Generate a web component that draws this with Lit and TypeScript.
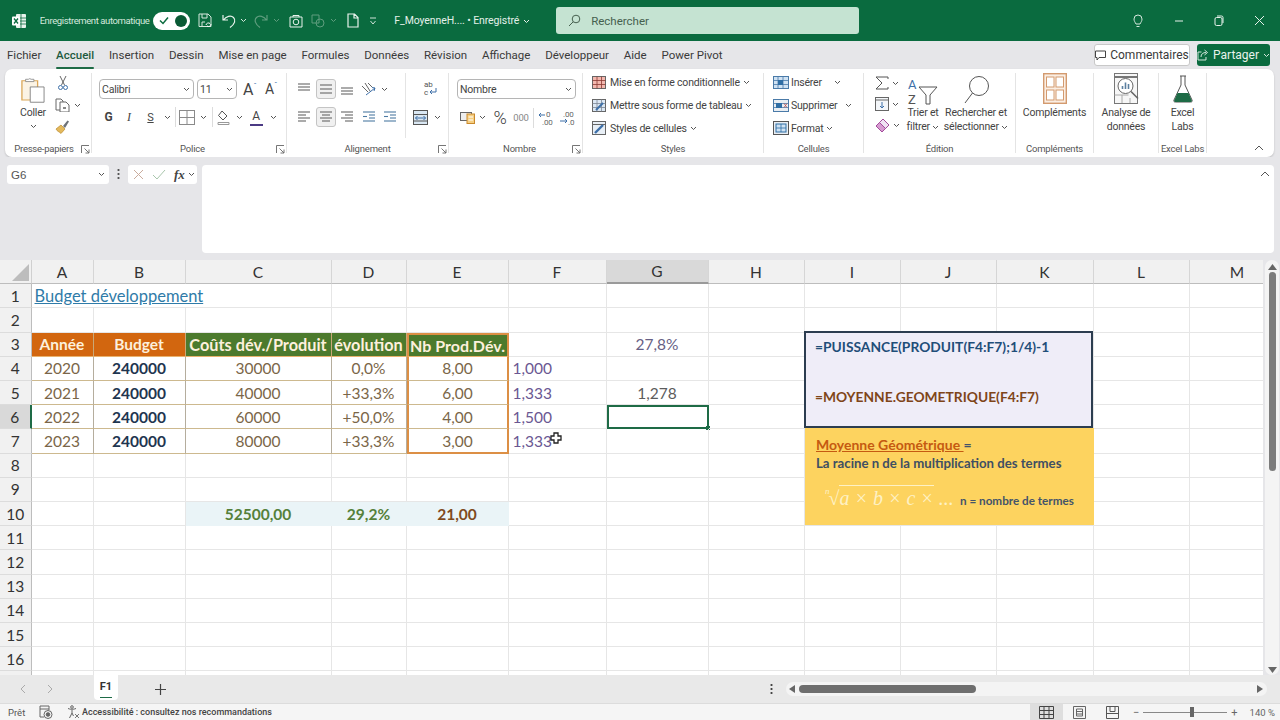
import { css, html, LitElement, svg, TemplateResult } from "lit";
import { customElement } from "lit/decorators.js";
import { classMap } from "lit/directives/class-map.js";

// small svg helper, every icon is stroked by default
const s = svg;
const ic = (w: number, h: number, body: unknown) => html`<svg
    width=${w} height=${h} viewBox="0 0 ${w} ${h}" fill="none" stroke="currentColor" stroke-width="1">${body}</svg>`;

const chev = (w = 7, c = "#555") => html`<svg width=${w} height="5" viewBox="0 0 7 5" fill="none" stroke=${c} stroke-width="1"><path d="M1 1l2.5 2.5L6 1"/></svg>`;
const lines = (rows: number[][], c = "#666") => html`<svg width="16" height="14" viewBox="0 0 16 14" fill="none" stroke=${c} stroke-width="1.1">
    ${rows.map((r) => s`<path d="M${r[0]} ${r[2]}H${r[1]}"/>`)}</svg>`;

const icons = {
    excel: html`<svg width="14" height="16" viewBox="0 0 14 16"><rect x="4" y="1" width="10" height="14" rx="1" fill="#e8f2ec"/><path d="M9 1v14M4 5h10M4 8h10M4 11h10" stroke="#0a6b3f" stroke-width=".8"/><rect x="0" y="3.5" width="8" height="9" rx="1" fill="#fff"/><path d="M2 5.5l4 5M6 5.5l-4 5" stroke="#0a6b3f" stroke-width="1.3"/></svg>`,
    save: ic(14, 15, s`<path d="M1 1h9l3 3v9.5H1zM4 1v4h5V1M4 14V9h3" stroke="#d5e8dd"/><path d="M8 12a2.5 2.5 0 014-1.5M13 11a2.5 2.5 0 01-4 2" stroke="#fff"/>`),
    undo: ic(16, 16, s`<path d="M2 2v5h5M2.5 7C5 3 10 2 12.5 4.5 15 7 14 11 9 14.5" stroke="#e8f2ec" stroke-width="1.2"/>`),
    redo: ic(16, 16, s`<path d="M14 2v5H9M13.5 7C11 3 6 2 3.5 4.5 1 7 2 11 7 14.5" stroke="#5f9d7e" stroke-width="1.2"/>`),
    cam: ic(14, 14, s`<path d="M1 3h12v10H1zM4 3V1.5h6V3" stroke="#e8f2ec"/><circle cx="7" cy="8" r="2.8" stroke="#e8f2ec"/>`),
    shapes: ic(14, 14, s`<path d="M1 1h7v8H1z" stroke="#5f9d7e"/><circle cx="9" cy="9" r="4" stroke="#5f9d7e"/>`),
    doc: ic(12, 15, s`<path d="M1 1h6.5L11 4.5V14H1zM7 1v4h4" stroke="#e8f2ec" stroke-width="1.2"/>`),
    more: ic(8, 8, s`<path d="M1 1h6M1.5 4l2.5 3 2.5-3" stroke="#cfe3d8"/>`),
    search: html`<svg width="13" height="13" viewBox="0 0 13 13" fill="none" stroke="#46604f"><circle cx="8" cy="5" r="3.8"/><path d="M5.2 7.8L1 12"/></svg>`,
    bulb: ic(10, 14, s`<path d="M3 10C2 8 1 7 1 5a4 4 0 018 0c0 2-1 3-2 5zM3.5 12.5h3" stroke="#d5e8dd"/>`),
    min: ic(10, 10, s`<path d="M1 5h8" stroke="#e8f2ec"/>`),
    restore: ic(10, 11, s`<rect x="1" y="2.5" width="7" height="8" rx="1.5" stroke="#e8f2ec"/><path d="M3 1h4.5A1.5 1.5 0 019 2.5V8" stroke="#e8f2ec"/>`),
    close: ic(11, 11, s`<path d="M1 1l9 9M10 1l-9 9" stroke="#e8f2ec"/>`),
    comment: ic(11, 11, s`<path d="M.5 1h10v6.5H4L2 10V7.5H.5z" stroke="#444"/>`),
    share: ic(12, 12, s`<path d="M4.5 3H1v8h8V8M4 8c0-3 2-4.5 5-4.5M7.5 1l3 2.5-3 2.5" stroke="#d5e8dd"/>`),
    paste: html`<svg width="24" height="26" viewBox="0 0 26 34" preserveAspectRatio="none" fill="none"><path d="M1 5h17v25H1z" fill="#fbf3e4" stroke="#dba757" stroke-width="1.4"/><path d="M5 6V3h3a2 2 0 013 0h3v3z" fill="#fff" stroke="#888"/><path d="M10 13h15v20H10z" fill="#fff" stroke="#777"/></svg>`,
    cut: ic(10, 16, s`<path d="M2 1l4.5 9M8 1L3.5 10" stroke="#666"/><circle cx="2.5" cy="12.5" r="2" stroke="#3d6fa8"/><circle cx="7.5" cy="12.5" r="2" stroke="#3d6fa8"/>`),
    copy: ic(15, 14, s`<path d="M1 1h5l2 2v9H1z" stroke="#666"/><path d="M5 4h6l3 3v7H5z" fill="#fff" stroke="#666"/><rect x="8" y="9" width="3" height="2" fill="#888" stroke="none"/>`),
    brush: html`<svg width="15" height="15" viewBox="0 0 15 15"><path d="M1 10l5-4 4 4-4 4.5c-1-1.5-4-2-5-4.5z" fill="#e4b95c" stroke="#b98a2c" stroke-width=".7"/><path d="M8 7l4.5-5.5 1.5 1L10 9" fill="#6d7278"/></svg>`,
    border: ic(16, 15, s`<rect x=".5" y=".5" width="15" height="14" stroke="#8a8a8a"/><path d="M8 .5v14M.5 7.5h15" stroke="#8a8a8a"/>`),
    fill: html`<svg width="16" height="15" viewBox="0 0 16 15" fill="none" stroke="#555"><path d="M6 1l5 5-4 4-4.5-4.5z"/><path d="M2 12.5h11v2H2z" fill="#fff" stroke="#999"/></svg>`,
    orient: html`<svg width="16" height="15" viewBox="0 0 16 15" fill="none" stroke="#666"><path d="M1 4l6 6M4 1l5 8M7 1l4 4" stroke-width="1"/><path d="M5 13L14 6M11 5.5l3 .5-1 3" stroke="#3d6fa8"/></svg>`,
    wrap: html`<svg width="15" height="17" viewBox="0 0 15 17"><text x="1" y="7" font-size="8" fill="#555" font-family="Roboto">ab</text><text x="1" y="15" font-size="8" fill="#555" font-family="Roboto">c</text><path d="M13 8v4H7M9 10l-2 2 2 2" fill="none" stroke="#3d6fa8"/></svg>`,
    merge: html`<svg width="15" height="15" viewBox="0 0 15 15" fill="none"><rect x=".5" y=".5" width="14" height="14" fill="#d9e7f3" stroke="#555"/><path d="M.5 4.5h14M.5 11h14" stroke="#555"/><path d="M2.5 8h10M4.5 6l-2 2 2 2M10.5 6l2 2-2 2" stroke="#3d6fa8"/></svg>`,
    account: html`<svg width="15" height="15" viewBox="0 0 15 15" fill="none"><rect x=".5" y="2.5" width="11" height="8" fill="#eee" stroke="#666"/><rect x="7" y="4" width="7.5" height="9.5" fill="#f6cf82" stroke="#c9892c"/><path d="M8.5 7h4.5M8.5 10h4.5" stroke="#fff"/></svg>`,
    decUp: html`<svg width="16" height="16" viewBox="0 0 16 16"><text x="8" y="7" font-size="8" fill="#666" font-family="Roboto">0</text><text x="4" y="15" font-size="8" fill="#666" font-family="Roboto">.00</text><path d="M1 5h6M3 3L1 5l2 2" fill="none" stroke="#3d6fa8"/></svg>`,
    decDown: html`<svg width="16" height="16" viewBox="0 0 16 16"><text x="4" y="7" font-size="8" fill="#666" font-family="Roboto">.00</text><text x="9" y="15" font-size="8" fill="#666" font-family="Roboto">.0</text><path d="M1 11h7M6 9l2 2-2 2" fill="none" stroke="#3d6fa8"/></svg>`,
    cond: html`<svg width="14" height="13" viewBox="0 0 14 13"><rect x=".5" y=".5" width="13" height="12" fill="#f3b7ae" stroke="#666"/><path d="M.5 4.5h13M.5 8.5h13M5 .5v12M9.5 .5v12" stroke="#8b3a33" stroke-width=".8"/></svg>`,
    table: html`<svg width="14" height="13" viewBox="0 0 14 13" fill="none"><rect x=".5" y=".5" width="13" height="12" fill="#dbe7f3" stroke="#666"/><path d="M.5 4.5h13M.5 8.5h13M5 .5v12M9.5 .5v12" stroke="#7b8794" stroke-width=".8"/><path d="M4 11l7-7" stroke="#3d6fa8" stroke-width="2"/></svg>`,
    cstyle: html`<svg width="14" height="14" viewBox="0 0 14 14" fill="none"><rect x=".5" y=".5" width="13" height="13" fill="#e8eff6" stroke="#666"/><path d="M.5 3.5h13" stroke="#666"/><path d="M3 12l8-8" stroke="#3d6fa8" stroke-width="2.4"/></svg>`,
    ins: html`<svg width="16" height="13" viewBox="0 0 16 13"><rect x=".5" y=".5" width="15" height="12" fill="#cfe2f3" stroke="#4a7aa8"/><path d="M5 .5v12M10 .5v12M.5 4.5h15M.5 8.5h15" stroke="#4a7aa8" stroke-width=".8"/><rect x="5" y="4" width="5" height="5" fill="#2f6ea5"/></svg>`,
    del: html`<svg width="16" height="13" viewBox="0 0 16 13"><rect x=".5" y=".5" width="15" height="12" fill="#e9eef3" stroke="#4a7aa8"/><path d="M.5 4.5h15M.5 8.5h15" stroke="#4a7aa8" stroke-width=".8"/><rect x="3" y="4" width="6" height="5" fill="#2f6ea5"/><path d="M11 4.5l3 4M14 4.5l-3 4" stroke="#b55" stroke-width=".9"/></svg>`,
    fmt: html`<svg width="16" height="14" viewBox="0 0 16 14"><rect x=".5" y=".5" width="15" height="13" fill="#e9eef3" stroke="#555"/><rect x="3" y="3" width="10" height="8" fill="#cfe2f3" stroke="#2f6ea5"/><path d="M3 7h10M8 3v8" stroke="#2f6ea5" stroke-width=".8"/></svg>`,
    sigma: html`<svg width="14" height="14" viewBox="0 0 14 14" fill="none" stroke="#555"><path d="M13 3V1H1l6 6-6 6h12v-2"/></svg>`,
    fillDown: html`<svg width="14" height="14" viewBox="0 0 14 14" fill="none"><rect x=".5" y=".5" width="13" height="13" fill="#f3f6f9" stroke="#666"/><path d="M.5 3h13" stroke="#666"/><path d="M7 5v6M5 9l2 2 2-2" stroke="#3d6fa8"/></svg>`,
    eraser: html`<svg width="15" height="15" viewBox="0 0 15 15"><path d="M1 8l7-7 6 6-7 7z" fill="#efe3f3" stroke="#a34b9c"/><path d="M1 8l3.5-3.5 6 6L7 14z" fill="#d69bd0" stroke="#a34b9c"/></svg>`,
    sort: html`<svg width="32" height="28" viewBox="0 0 32 28"><text x="1" y="11" font-size="13" fill="#3d6fa8" font-family="Roboto">A</text><text x="1" y="26" font-size="13" fill="#555" font-family="Roboto">Z</text><path d="M12 9h18l-7 8v9h-4v-9z" fill="none" stroke="#555"/></svg>`,
    find: html`<svg width="26" height="30" viewBox="0 0 26 30" fill="none" stroke="#555" stroke-width="1"><circle cx="16" cy="11" r="9.5"/><path d="M9.5 18L2 28"/></svg>`,
    addin: html`<svg width="24" height="31" viewBox="0 0 24 31"><rect x=".7" y=".7" width="22.6" height="29.6" fill="#fbeee3" stroke="#d39a6f" stroke-width="1.4"/><g fill="#fff" stroke="#d39a6f"><rect x="3.5" y="4" width="7.5" height="10"/><rect x="13" y="4" width="7.5" height="10"/><rect x="3.5" y="17" width="7.5" height="10"/><rect x="13" y="17" width="7.5" height="10"/></g></svg>`,
    analyze: html`<svg width="25" height="31" viewBox="0 0 25 31" fill="none"><rect x=".5" y=".5" width="23" height="30" fill="#f7f7f7" stroke="#777"/><path d="M.5 4h23" stroke="#777" stroke-width="2"/><path d="M.5 22h14M8 22v8M16 25v5" stroke="#aaa"/><circle cx="11.5" cy="13" r="7.5" fill="#fff" stroke="#666"/><path d="M8.5 16v-3M11.5 16V9.5M14.5 16v-5" stroke="#5b7f9f" stroke-width="1.6"/><path d="M17 18.5l7 7" stroke="#666" stroke-width="1.6"/></svg>`,
    flask: html`<svg width="20" height="28" viewBox="0 0 20 28"><path d="M7 1h6M8 1v9L1 25c-.5 1.5 0 2 1.5 2h15c1.5 0 2-.5 1.5-2L12 10V1" fill="none" stroke="#555"/><path d="M4.5 18h11l3.5 8-1 1H2l-1-1z" fill="#1e6b46"/></svg>`,
    launcher: html`<svg width="9" height="9" viewBox="0 0 9 9" fill="none" stroke="#666" stroke-width=".9"><path d="M.5 8V.5H8M3.5 3.5L8 8M8 4.5V8H4.5"/></svg>`,
    collapse: html`<svg width="10" height="6" viewBox="0 0 10 6" fill="none" stroke="#555"><path d="M1 5l4-4 4 4"/></svg>`,
    cancel: html`<svg width="11" height="11" viewBox="0 0 11 11" fill="none" stroke="#c9ab9c"><path d="M1 1l9 9M10 1l-9 9"/></svg>`,
    enter: html`<svg width="14" height="11" viewBox="0 0 14 11" fill="none" stroke="#a9c6ac"><path d="M1 6l4 4 8-9"/></svg>`,
    cursor: html`<svg width="12" height="12" viewBox="0 0 12 12"><path d="M4 1h4v3h3v4H8v3H4V8H1V4h3z" fill="#fff" stroke="#222" stroke-width="1.3"/></svg>`,
    macro: html`<svg width="14" height="14" viewBox="0 0 14 14" fill="none" stroke="#666"><path d="M1 1h9v4M1 1v11h4M1 4h9"/><circle cx="9" cy="9.5" r="4"/><circle cx="9" cy="9.5" r="1.8" fill="#666"/></svg>`,
    access: html`<svg width="13" height="14" viewBox="0 0 13 14" fill="none" stroke="#666"><circle cx="5" cy="2" r="1.3"/><path d="M1 3.5c2 1 6 1 8 0M5 5v3M5 8l-2.5 5M5 8l1.5 3"/><path d="M8 9l4 4M12 9l-4 4" stroke="#777"/></svg>`,
    viewNormal: html`<svg width="15" height="13" viewBox="0 0 15 13" fill="none" stroke="#444"><path d="M.5 .5h14v12H.5zM.5 4.5h14M.5 8.5h14M5 .5v12M10 .5v12"/></svg>`,
    viewPage: html`<svg width="13" height="13" viewBox="0 0 13 13" fill="none" stroke="#666"><path d="M.5 .5h12v12H.5z"/><path d="M3.5 3h6v7h-6zM3.5 5.5h6M3.5 8h6"/></svg>`,
    viewBreak: html`<svg width="13" height="13" viewBox="0 0 13 13" fill="none" stroke="#555"><path d="M.5 .5h12v12H.5zM.5 7.5h12M4 .5v5h5v-5"/></svg>`,
    navL: html`<svg width="6" height="10" viewBox="0 0 6 10" fill="none" stroke="#aaa"><path d="M5 1L1 5l4 4"/></svg>`,
    navR: html`<svg width="6" height="10" viewBox="0 0 6 10" fill="none" stroke="#aaa"><path d="M1 1l4 4-4 4"/></svg>`,
    plus: html`<svg width="11" height="11" viewBox="0 0 11 11" fill="none" stroke="#444" stroke-width="1.2"><path d="M5.5 0v11M0 5.5h11"/></svg>`,
};

@customElement("xl-titlebar")
export class XlTitlebar extends LitElement {
    protected render(): TemplateResult {
        return html`
            <div class="bar">
                <span class="logo">${icons.excel}</span>
                <span class="auto">Enregistrement automatique</span>
                <span class="toggle">
                    <svg width="10" height="9" viewBox="0 0 10 9" fill="none" stroke="#0a6b3f" stroke-width="1.5"><path d="M1 4.5l3 3 5-6"/></svg>
                    <i></i>
                </span>
                <span class="q save">${icons.save}</span>
                <span class="q undo">${icons.undo}</span>
                <span class="q c1">${chev(7, "#d5e8dd")}</span>
                <span class="q redo">${icons.redo}</span>
                <span class="q c1">${chev(7, "#5f9d7e")}</span>
                <span class="q cam">${icons.cam}</span>
                <span class="q shp">${icons.shapes}</span>
                <span class="q c1">${chev(7, "#5f9d7e")}</span>
                <span class="q docu">${icons.doc}</span>
                <span class="q mor">${icons.more}</span>
                <span class="file">F_MoyenneH.... • Enregistré ${chev(9, "#e8f2ec")}</span>
                <div class="search">${icons.search}<span>Rechercher</span></div>
                <span class="win bulb">${icons.bulb}</span>
                <span class="win">${icons.min}</span>
                <span class="win">${icons.restore}</span>
                <span class="win">${icons.close}</span>
            </div>
        `;
    }

    static styles = css`
        .bar {
            align-items: center;
            background: #0a6b3f;
            color: #e3f0e9;
            display: flex;
            font: 10px Roboto, sans-serif;
            height: 41px;
        }
        .logo { display: flex; margin-left: 12px; width: 28px; }
        .auto { color: #d5e8dd; font-size: 9.5px; letter-spacing: -0.4px; white-space: nowrap; width: 115px; }
        .toggle {
            align-items: center;
            background: #fff;
            border-radius: 9px;
            box-sizing: border-box;
            display: flex;
            height: 18px;
            justify-content: space-between;
            padding: 0 3px 0 6px;
            width: 37px;
        }
        .toggle i { background: #0a5a35; border-radius: 50%; height: 12px; width: 12px; }
        .q { align-items: center; display: flex; justify-content: center; }
        .save { margin-left: 7px; width: 16px; }
        .undo { margin-left: 8px; width: 16px; }
        .c1 { margin-left: 2px; width: 11px; }
        .redo { margin-left: 4px; width: 16px; }
        .cam { margin-left: 6px; width: 16px; }
        .shp { margin-left: 6px; width: 16px; }
        .docu { margin-left: 7px; width: 14px; }
        .mor { margin-left: 9px; width: 10px; }
        .file { font-size: 10.5px; letter-spacing: -0.1px; margin-left: 16px; white-space: nowrap; width: 164px; }
        .search {
            align-items: center;
            background: #c5e3d2;
            border-radius: 3px;
            box-sizing: border-box;
            color: #45604f;
            display: flex;
            font-size: 11.5px;
            gap: 10px;
            height: 27px;
            padding-left: 12px;
            width: 307px;
        }
        .win { display: flex; justify-content: center; width: 41px; }
        .bulb { margin-left: 259px; }
    `;
}

const tabs = ["Fichier", "Accueil", "Insertion", "Dessin", "Mise en page", "Formules", "Données", "Révision", "Affichage", "Développeur", "Aide", "Power Pivot"];

@customElement("xl-tabs")
export class XlTabs extends LitElement {
    protected render(): TemplateResult {
        return html`
            <div class="row">
                ${tabs.map((t) => html`<span class=${classMap({ tab: true, on: t === "Accueil" })}>${t}</span>`)}
                <span class="btn comment">${icons.comment}Commentaires</span>
                <span class="btn share">${icons.share}Partager ${chev(7, "#d5e8dd")}</span>
            </div>
        `;
    }

    static styles = css`
        .row {
            align-items: center;
            background: #e6e6e9;
            color: #3a3a3a;
            display: flex;
            font: 11.5px Roboto, sans-serif;
            gap: 14.8px;
            height: 28px;
            padding-left: 7px;
        }
        .tab { align-items: center; display: flex; height: 28px; position: relative; }
        .on { color: #1e5a3e; font-weight: 500; }
        .on::after {
            background: #1e6b46;
            border-radius: 1px;
            bottom: 0;
            content: "";
            height: 2px;
            left: 0;
            position: absolute;
            right: 0;
        }
        .btn {
            align-items: center;
            border-radius: 3px;
            box-sizing: border-box;
            display: flex;
            font-size: 12px;
            gap: 4px;
            height: 22px;
            white-space: nowrap;
        }
        .comment {
            background: #fff;
            border: 1px solid #c8c8c8;
            justify-content: center;
            margin-left: auto;
            width: 96px;
        }
        .share {
            background: #0a6b3f;
            color: #e8f2ec;
            justify-content: center;
            margin-left: -7.8px;
            margin-right: 10px;
            width: 73px;
        }
    `;
}

const styleRows = [
    [icons.cond, "Mise en forme conditionnelle"],
    [icons.table, "Mettre sous forme de tableau"],
    [icons.cstyle, "Styles de cellules"],
] as const;

const cellRows = [
    [icons.ins, "Insérer", "i"],
    [icons.del, "Supprimer", "d"],
    [icons.fmt, "Format", "f"],
] as const;

@customElement("xl-ribbon")
export class XlRibbon extends LitElement {
    private label(text: string, launcher = true): TemplateResult {
        return html`<div class="label"><span>${text}</span>${launcher ? html`<i class="launch">${icons.launcher}</i>` : ""}</div>`;
    }

    protected render(): TemplateResult {
        return html`
            <div class="ribbon">
                <section class="g clip">
                    <div class="body clip-body">
                        <div class="paste">${icons.paste}<span>Coller</span>${chev()}</div>
                        <div class="clip-tools">
                            <span class="cut">${icons.cut}</span>
                            <span>${icons.copy}${chev()}</span>
                            <span>${icons.brush}</span>
                        </div>
                    </div>
                    ${this.label("Presse-papiers")}
                </section>

                <section class="g police">
                    <div class="body rows">
                        <div class="r police1">
                            <span class="sel">Calibri ${chev()}</span>
                            <i></i>
                            <span class="sel">11 ${chev()}</span>
                            <span class="ab big">A<sup>ˆ</sup></span>
                            <span class="ab">A<sup>ˇ</sup></span>
                        </div>
                        <div class="r police2">
                            <b class="t fG">G</b>
                            <em class="t fI">I</em>
                            <u class="t fS">S</u>
                            <span class="t">${chev()}</span>
                            <span class="t"><i class="sep"></i></span>
                            <span class="t">${icons.border}</span>
                            <span class="t">${chev()}</span>
                            <span class="t"><i class="sep"></i></span>
                            <span class="t">${icons.fill}</span>
                            <span class="t">${chev()}</span>
                            <span class="t fA">A</span>
                            <span class="t">${chev()}</span>
                        </div>
                    </div>
                    ${this.label("Police")}
                </section>

                <section class="g align">
                    <div class="body align-body">
                        <div class="rows">
                            <div class="r al">
                                <span class="t">${lines([[2, 14, 2], [2, 14, 5], [2, 14, 8]])}</span>
                                <span class="t on">${lines([[2, 14, 3], [2, 14, 7], [2, 14, 11]])}</span>
                                <span class="t">${lines([[2, 14, 6], [2, 14, 9], [2, 14, 12]])}</span>
                                <span class="t">${icons.orient}</span>
                                <span class="t">${chev()}</span>
                            </div>
                            <div class="r al">
                                <span class="t">${lines([[2, 14, 2], [2, 10, 5], [2, 14, 8], [2, 10, 11]])}</span>
                                <span class="t on">${lines([[2, 14, 2], [4, 12, 5], [2, 14, 8], [4, 12, 11]])}</span>
                                <span class="t">${lines([[2, 14, 2], [6, 14, 5], [2, 14, 8], [6, 14, 11]])}</span>
                                <span class="t">${lines([[2, 14, 2], [8, 14, 5], [8, 14, 8], [2, 14, 11], [2, 6, 6.5]], "#4d7aa3")}</span>
                                <span class="t">${lines([[2, 14, 2], [8, 14, 5], [8, 14, 8], [2, 14, 11], [2, 6, 6.5]], "#4d7aa3")}</span>
                            </div>
                        </div>
                        <div class="wrapcol">
                            <span class="t">${icons.wrap}</span>
                            <span class="t mergeb">${icons.merge}${chev()}</span>
                        </div>
                    </div>
                    ${this.label("Alignement")}
                </section>

                <section class="g nombre">
                    <div class="body rows">
                        <div class="r"><span class="sel wide">Nombre ${chev()}</span></div>
                        <div class="r nombre2">
                            <span class="t">${icons.account}</span>
                            <span class="t">${chev()}</span>
                            <span class="t pct">%</span>
                            <span class="t mil">000</span>
                            <span class="t"><i class="sep"></i></span>
                            <span class="t">${icons.decUp}</span>
                            <span class="t">${icons.decDown}</span>
                        </div>
                    </div>
                    ${this.label("Nombre")}
                </section>

                <section class="g styles">
                    <div class="body list">
                        ${styleRows.map((r) => html`<div class="li"><span class="li-ic">${r[0]}</span>${r[1]} ${chev()}</div>`)}
                    </div>
                    ${this.label("Styles", false)}
                </section>

                <section class="g cells">
                    <div class="body list">
                        ${cellRows.map((r) => html`<div class="li ${r[2]}"><span class="li-ic">${r[0]}</span>${r[1]} ${chev()}</div>`)}
                    </div>
                    ${this.label("Cellules", false)}
                </section>

                <section class="g edit">
                    <div class="body edit-body">
                        <div class="edit-col">
                            <span class="t">${icons.sigma}${chev()}</span>
                            <span class="t">${icons.fillDown}${chev()}</span>
                            <span class="t">${icons.eraser}${chev()}</span>
                        </div>
                        <div class="bigb sort">${icons.sort}<span>Trier et<br />filtrer ${chev()}</span></div>
                        <div class="bigb find">${icons.find}<span>Rechercher et<br />sélectionner ${chev()}</span></div>
                    </div>
                    ${this.label("Édition", false)}
                </section>

                <section class="g addins">
                    <div class="body bigb">${icons.addin}<span>Compléments</span></div>
                    ${this.label("Compléments", false)}
                </section>

                <section class="g data">
                    <div class="body bigb">${icons.analyze}<span>Analyse de<br />données</span></div>
                </section>

                <section class="g labs">
                    <div class="body bigb">${icons.flask}<span>Excel<br />Labs</span></div>
                    ${this.label("Excel Labs", false)}
                </section>

                <span class="collapse">${icons.collapse}</span>
            </div>
        `;
    }

    static styles = css`
        :host { display: block; padding: 0 6px 0 5px; }
        .ribbon {
            background: #fff;
            border-radius: 7px;
            box-shadow: 0 1px 2px rgba(0, 0, 0, 0.18);
            color: #444;
            display: flex;
            font: 10.5px Roboto, sans-serif;
            height: 88px;
            letter-spacing: -0.2px;
            white-space: nowrap;
        }
        .g {
            border-right: 1px solid #e4e4e4;
            box-sizing: border-box;
            display: flex;
            flex-direction: column;
            height: 80px;
            margin-top: 4px;
        }
        .body { flex: 1; min-height: 0; }
        .label {
            color: #555;
            font-size: 9.5px;
            height: 14px;
            line-height: 14px;
            margin-bottom: -3px;
            position: relative;
            text-align: center;
        }
        .launch { bottom: 2px; display: flex; position: absolute; right: 1px; }
        .t { align-items: center; display: flex; justify-content: center; }
        .sep { background: #dcdcdc; display: block; height: 20px; width: 1px; }
        svg { display: block; flex: none; }

        .clip { width: 87px; }
        .clip .label { letter-spacing: -0.25px; padding-right: 8px; }
        .clip-body { display: flex; }
        .paste {
            align-items: center;
            display: flex;
            flex: none;
            flex-direction: column;
            margin-left: 8px;
            padding-top: 4px;
            width: 40px;
        }
        .paste span { line-height: 14px; margin: 3px 0 4px; }
        .clip-tools {
            align-items: flex-start;
            display: flex;
            flex-direction: column;
            gap: 7px;
            padding: 2px 0 0 2px;
        }
        .clip-tools span { align-items: center; display: flex; gap: 4px; }
        .clip-tools .cut { margin-left: 3px; }

        .rows { display: flex; flex-direction: column; gap: 8px; padding-top: 6px; }
        .r { display: grid; height: 20px; }
        .sel {
            align-items: center;
            border: 1px solid #b5b5b5;
            border-radius: 4px;
            box-sizing: border-box;
            display: flex;
            font-size: 10.5px;
            justify-content: space-between;
            padding: 0 3px 0 2px;
        }
        .wide { width: 119px; }

        .police { padding-left: 7px; width: 195px; }
        .police1 { grid-template-columns: 95px 3px 40px 22px 22px; }
        .police2 { grid-template-columns: 19px 22px 21px 12px 4px 20px 12px 6px 18px 12px 22px 12px; }
        .ab { align-self: center; font-size: 14px; margin-left: 6px; }
        .ab.big { font-size: 16px; }
        .ab sup { color: #3d6fa8; font-size: 8px; line-height: 0; }
        .fG { font-size: 12px; }
        .fI { font-family: "Liberation Serif", serif; font-size: 12px; }
        .fS { font-size: 11px; }
        .fA {
            align-self: center;
            border-bottom: 2.5px solid #4b3a84;
            color: #444;
            font-size: 12px;
            height: 15px;
            justify-self: center;
            width: 13px;
        }

        .align { width: 162px; }
        .align-body { display: flex; padding-left: 7px; }
        .al { column-gap: 1.5px; grid-template-columns: repeat(4, 20px) 8px; width: 111px; }
        .al:last-child { grid-template-columns: repeat(5, 20px); }
        .t.on { background: #f0f0f0; border: 1px solid #c4c4c4; border-radius: 3px; box-sizing: border-box; }
        .wrapcol {
            border-left: 1px solid #e4e4e4;
            display: flex;
            flex-direction: column;
            gap: 13px;
            height: 58px;
            padding: 7px 0 0 7px;
            width: 36px;
        }
        .mergeb { gap: 6px; justify-content: flex-start; }

        .nombre { padding-left: 8px; width: 134px; }
        .nombre2 { grid-template-columns: 20px 11px 24px 18px 6px 20px 22px; }
        .pct { font-size: 18px; font-weight: 300; }
        .mil { color: #888; font-size: 9.5px; }

        .styles { width: 181px; }
        .cells { width: 100px; }
        .list { display: flex; flex-direction: column; gap: 5px; padding-left: 9px; }
        .li { align-items: center; display: flex; gap: 3px; height: 18px; }
        .li-ic { display: flex; margin-right: 1px; }
        .cells .li-ic { margin-right: -1px; }
        .i > svg { margin-left: 9px; }
        .d > svg { margin-left: 5px; }

        .edit { width: 152px; }
        .edit-body { display: flex; }
        .edit-col {
            display: flex;
            flex-direction: column;
            gap: 7px;
            padding: 3px 0 0 11px;
            width: 31px;
        }
        .edit-col .t { gap: 3px; justify-content: flex-start; }
        .bigb {
            align-items: center;
            display: flex;
            flex-direction: column;
            line-height: 14px;
            text-align: center;
        }
        .bigb span { margin-top: 1px; }
        .bigb span svg { display: inline-block; vertical-align: middle; }
        .sort { padding-top: 5px; width: 34px; }
        .find { padding-top: 2px; width: 72px; }
        .sort span { margin-top: 0; }
        .addins { width: 78px; }
        .data { width: 65px; }
        .labs { width: 48px; }
        .addins svg, .data svg { margin-bottom: 1px; }
        .labs svg { margin: 2px 0; }
        .collapse { align-self: flex-end; margin: 0 10px 6px auto; }
    `;
}

@customElement("xl-formula")
export class XlFormula extends LitElement {
    protected render(): TemplateResult {
        return html`
            <div class="bar">
                <div class="name">G6 ${chev(9, "#555")}</div>
                <span class="dots"></span>
                <div class="fx">
                    ${icons.cancel}${icons.enter}
                    <em>fx</em>${chev()}
                </div>
                <div class="input">${icons.collapse}</div>
            </div>
        `;
    }

    static styles = css`
        .bar {
            align-items: flex-start;
            background: #e6e6e9;
            box-sizing: border-box;
            display: flex;
            font: 11.5px "Liberation Sans", sans-serif;
            height: 103px;
            padding: 8px 6px 0 7px;
        }
        svg { display: block; flex: none; }
        .name {
            align-items: center;
            background: #fff;
            border-radius: 3px;
            box-sizing: border-box;
            color: #555;
            display: flex;
            height: 19px;
            justify-content: space-between;
            padding: 0 3px 0 4px;
            width: 102px;
        }
        .dots {
            background: radial-gradient(circle, #555 1px, transparent 1.2px) center / 3px 4px repeat-y;
            height: 12px;
            margin: 3px 8px 0;
            width: 3px;
        }
        .fx {
            align-items: center;
            background: #fff;
            border-radius: 3px;
            box-sizing: border-box;
            display: flex;
            gap: 8px;
            height: 19px;
            padding-left: 5px;
            width: 69px;
        }
        .fx em { color: #444; font: italic bold 13px "Liberation Serif", serif; margin-right: -5px; }
        .input {
            background: #fff;
            border-radius: 4px;
            box-sizing: border-box;
            display: flex;
            flex: 1;
            height: 88px;
            justify-content: flex-end;
            margin-left: 5px;
            padding: 6px 4px 0 0;
        }
    `;
}

const COLS = ["A", "B", "C", "D", "E", "F", "G", "H", "I", "J", "K", "L", "M"];

type Cell = { t: string; c: string };
const cells: Record<string, Cell> = {
    A1: { t: "Budget développement", c: "link" },
    B1: { t: "", c: "noline" },
    A3: { t: "Année", c: "hd or" },
    B3: { t: "Budget", c: "hd or" },
    C3: { t: "Coûts dév./Produit", c: "hd gr" },
    D3: { t: "évolution", c: "hd gr" },
    E3: { t: "Nb Prod.Dév.", c: "hd gr ebox etop" },
    G3: { t: "27,8%", c: "vi" },
    G5: { t: "1,278", c: "gy" },
    C10: { t: "52500,00", c: "tot tg" },
    D10: { t: "29,2%", c: "tot tg" },
    E10: { t: "21,00", c: "tot tb" },
};
[
    ["2020", "30000", "0,0%", "8,00", "1,000"],
    ["2021", "40000", "+33,3%", "6,00", "1,333"],
    ["2022", "60000", "+50,0%", "4,00", "1,500"],
    ["2023", "80000", "+33,3%", "3,00", "1,333"],
].forEach((d, i) => {
    const r = i + 4;
    cells[`A${r}`] = { t: d[0], c: "td" };
    cells[`B${r}`] = { t: "240000", c: "td navy" };
    cells[`C${r}`] = { t: d[1], c: "td" };
    cells[`D${r}`] = { t: d[2], c: "td" };
    cells[`E${r}`] = { t: d[3], c: r === 7 ? "td ebox ebot" : "td ebox" };
    cells[`F${r}`] = { t: d[4], c: "ratio" };
});
cells.G6 = { t: "", c: "current" };

@customElement("xl-sheet")
export class XlSheet extends LitElement {
    protected render(): TemplateResult {
        const rows = Array.from({ length: 17 }, (_, i) => i + 1);
        return html`
            <div class="sheet">
                <div class="wrap">
                    <div class="grid">
                        <div class="corner"><i></i></div>
                        ${COLS.map((c) => html`<div class=${classMap({ ch: true, chs: c === "G" })}>${c}</div>`)}
                        ${rows.map((r) => html`
                            <div class=${classMap({ rh: true, rhs: r === 6 })}>${r < 17 ? r : ""}</div>
                            ${COLS.map((c) => {
                                const cell = cells[`${c}${r}`];
                                return html`<div class="cell ${cell?.c ?? ""}">${cell?.t ?? ""}</div>`;
                            })}
                        `)}
                    </div>
                    <div class="fbox">
                        <div class="f1">=PUISSANCE(PRODUIT(F4:F7);1/4)-1</div>
                        <div class="f2">=MOYENNE.GEOMETRIQUE(F4:F7)</div>
                    </div>
                    <div class="ybox">
                        <div class="y1"><u>Moyenne Géométrique </u><span>=</span></div>
                        <div class="y2">La racine n de la multiplication des termes</div>
                        <div class="y3">
                            <span class="math"><sup>n</sup><span class="root">√</span><span class="rad">a × b × c ×</span> ...</span>
                            <span class="nb">n = nombre de termes</span>
                        </div>
                    </div>
                    <span class="cursor">${icons.cursor}</span>
                </div>
                <div class="vscroll">
                    <svg width="9" height="6" viewBox="0 0 9 6"><path d="M4.5 0L9 6H0z" fill="#666"/></svg>
                    <i></i>
                    <svg width="9" height="6" viewBox="0 0 9 6"><path d="M4.5 6L9 0H0z" fill="#666"/></svg>
                </div>
            </div>
        `;
    }

    static styles = css`
        .sheet { background: #e6e6e9; display: flex; height: 415px; }
        .wrap { flex: none; height: 415px; overflow: hidden; position: relative; width: 1263px; }
        .grid {
            background: #fff;
            color: #222;
            display: grid;
            font: 15.5px Lato, sans-serif;
            grid-auto-rows: 24.2px;
            grid-template-columns: 31.5px 62px 92px 146px 75px 102px 98px 102px 96px 96px 96px 97px 96px 96px;
            grid-template-rows: 24.3px;
        }
        .corner { background: #f1f1f1; border-bottom: 1px solid #bdbdbd; border-right: 1px solid #d0d0d0; box-sizing: border-box; }
        .corner i {
            background: #bdbdbd;
            clip-path: polygon(100% 0, 100% 100%, 0 100%);
            display: block;
            height: 17px;
            margin: 4px 0 0 12px;
            width: 17px;
        }
        .ch, .rh { align-items: center; box-sizing: border-box; color: #333; display: flex; justify-content: center; }
        .ch { background: #f1f1f1; border-bottom: 1px solid #bdbdbd; border-right: 1px solid #d6d6d6; }
        .chs { background: #d9d9d9; border-bottom: 2px solid #9a9a9a; }
        .rh { background: #f1f1f1; border-bottom: 1px solid #dcdcdc; border-right: 1px solid #bdbdbd; }
        .rhs { background: #d9d9d9; border-right: 2px solid #1e6b46; }
        .cell {
            align-items: center;
            border-bottom: 1px solid #e6e6e6;
            border-right: 1px solid #e6e6e6;
            box-sizing: border-box;
            display: flex;
            justify-content: center;
            position: relative;
            white-space: nowrap;
        }
        .link {
            border-right: 0;
            color: #2f7ba8;
            font-size: 16.5px;
            justify-content: flex-start;
            padding-left: 3px;
            text-decoration: underline;
        }
        .noline { border-right: 0; }
        .hd { border-bottom: 1px solid #e9b26e; border-right: 1px solid #c9a877; color: #fdf0dc; font-weight: 700; }
        .or { background: #d2660f; }
        .gr { background: #4c7a2d; font-size: 16.3px; }
        .td { border-bottom: 1px solid #cdb98f; border-right: 1px solid #b5ad9d; color: #7a6648; }
        .navy { color: #1f3550; font-weight: 700; }
        .ebox { border-left: 2px solid #dc8f45; border-right: 2px solid #dc8f45; }
        .etop { border-top: 2px solid #dc8f45; font-size: 16px; }
        .ebot { border-bottom: 2px solid #dc8f45; }
        .ratio { color: #6a5792; justify-content: flex-start; padding-left: 4px; }
        .vi { color: #675f85; }
        .gy { color: #5c5c5c; }
        .tot { background: #eaf4f7; border-color: #eaf4f7; font-weight: 700; }
        .tg { color: #55803a; }
        .tb { color: #7f4a1d; }
        .current { outline: 2px solid #1e6b46; outline-offset: -2px; }
        .current::after {
            background: #1e6b46;
            bottom: -2px;
            content: "";
            height: 4px;
            position: absolute;
            right: -2px;
            width: 4px;
        }
        .fbox {
            background: #efedf8;
            border: 2px solid #2c3d50;
            box-sizing: border-box;
            display: flex;
            flex-direction: column;
            font: 700 13.8px Lato, sans-serif;
            gap: 33px;
            height: 97px;
            left: 804px;
            padding: 5px 9px;
            position: absolute;
            top: 71px;
            width: 289px;
        }
        .f1 { color: #1f4e79; }
        .f2 { color: #7f4519; }
        .ybox {
            background: #fdd35f;
            box-sizing: border-box;
            font: 700 13.2px Lato, sans-serif;
            height: 97px;
            left: 805px;
            padding: 8px 11px;
            position: absolute;
            top: 168px;
            width: 289px;
        }
        .y1 { color: #c55a11; font-size: 14px; line-height: 17px; }
        .y1 span { color: #44546a; }
        .y2 { color: #3f4f63; line-height: 16px; margin-top: 2px; white-space: nowrap; }
        .y3 { align-items: center; display: flex; margin-top: 16px; padding-left: 9px; }
        .math { color: #fdf1c5; font: italic 20px "Liberation Serif", serif; white-space: nowrap; width: 135px; }
        .math sup { font-size: 9px; line-height: 0; margin-right: -1px; vertical-align: 11px; }
        .root { font-style: normal; }
        .rad { border-top: 1px solid #fdf1c5; padding-top: 1px; }
        .nb { color: #44546a; font-size: 11.7px; margin-top: 2px; white-space: nowrap; }
        .cursor { display: flex; left: 550px; position: absolute; top: 172px; }
        .vscroll {
            align-items: center;
            background: #f4f4f4;
            border-radius: 8px;
            box-sizing: border-box;
            display: flex;
            flex-direction: column;
            height: 415px;
            margin-left: 2px;
            padding-top: 4px;
            width: 14px;
        }
        .vscroll i { background: #7c7c7c; border-radius: 4px; display: block; height: 199px; margin: 2px 0 196px; width: 7px; }
    `;
}

@customElement("xl-footer")
export class XlFooter extends LitElement {
    protected render(): TemplateResult {
        return html`
            <div class="tabs">
                <span class="nav first">${icons.navL}</span>
                <span class="nav">${icons.navR}</span>
                <span class="sheet-tab">F1</span>
                <span class="plus">${icons.plus}</span>
                <span class="dots"></span>
                <div class="hs">
                    <svg width="6" height="8" viewBox="0 0 6 8"><path d="M0 4l6-4v8z" fill="#666"/></svg>
                    <i></i>
                    <svg width="6" height="8" viewBox="0 0 6 8"><path d="M6 4L0 0v8z" fill="#666"/></svg>
                </div>
            </div>
            <div class="status">
                <span class="ready">Prêt</span>
                <span class="mac">${icons.macro}</span>
                <span class="acc">${icons.access}<b>Accessibilité : consultez nos recommandations</b></span>
                <span class="view on">${icons.viewNormal}</span>
                <span class="view">${icons.viewPage}</span>
                <span class="view">${icons.viewBreak}</span>
                <span class="zoom"><em>−</em><span class="track"><i></i></span><em>+</em></span>
                <span class="pct">140 %</span>
            </div>
        `;
    }

    static styles = css`
        :host { display: block; font-family: Roboto, sans-serif; }
        svg { display: block; flex: none; }
        .tabs { align-items: center; background: #e9e9e9; display: flex; height: 28px; }
        .nav { display: flex; justify-content: center; width: 27px; }
        .nav.first { margin-left: 9px; }
        .sheet-tab {
            align-self: flex-start;
            background: #fff;
            border-radius: 0 0 4px 4px;
            box-sizing: border-box;
            color: #333;
            font-size: 11px;
            font-weight: 700;
            height: 25px;
            line-height: 24px;
            margin-left: 31px;
            position: relative;
            text-align: center;
            width: 24px;
        }
        .sheet-tab::after {
            background: #1e6b46;
            bottom: 2px;
            content: "";
            height: 1.5px;
            left: 6px;
            position: absolute;
            right: 6px;
        }
        .plus { display: flex; justify-content: center; margin-left: 36px; width: 12px; }
        .dots {
            background: radial-gradient(circle, #444 1px, transparent 1.2px) center / 3px 4px repeat-y;
            height: 12px;
            margin-left: 604px;
            width: 3px;
        }
        .hs {
            align-items: center;
            background: #f4f4f4;
            border-radius: 8px;
            box-sizing: border-box;
            display: flex;
            height: 14px;
            margin-left: 13px;
            padding: 0 4px 0 3px;
            width: 481px;
        }
        .hs i { background: #6e6e6e; border-radius: 4px; display: block; height: 8px; margin: 0 auto 0 4px; width: 177px; }
        .status {
            align-items: center;
            background: #f5f5f5;
            border-top: 1px solid #dcdcdc;
            box-sizing: border-box;
            color: #555;
            display: flex;
            font-size: 9.5px;
            height: 17px;
            white-space: nowrap;
        }
        .ready { margin-left: 8px; width: 31px; }
        .mac { width: 28px; }
        .acc { align-items: center; display: flex; gap: 2px; width: 963px; }
        .acc b { color: #444; font-size: 9px; font-weight: 500; }
        .view { align-items: center; display: flex; height: 16px; justify-content: center; width: 33px; }
        .view.on { background: #dedede; }
        .zoom { align-items: center; display: flex; gap: 4px; margin-left: 4px; }
        .zoom em { color: #666; font-size: 11px; font-style: normal; }
        .track { background: #888; display: block; height: 1px; position: relative; width: 84px; }
        .track i { background: #666; display: block; height: 10px; left: 47px; position: absolute; top: -5px; width: 4px; }
        .pct { color: #666; margin-left: 12px; }
    `;
}

@customElement("app-root")
export class AppRoot extends LitElement {
    protected render(): TemplateResult {
        return html`
            <xl-titlebar></xl-titlebar>
            <xl-tabs></xl-tabs>
            <xl-ribbon></xl-ribbon>
            <xl-formula></xl-formula>
            <xl-sheet></xl-sheet>
            <xl-footer></xl-footer>
        `;
    }

    static styles = css`
        :host {
            background: #e6e6e9;
            display: block;
            height: 720px;
            overflow: hidden;
            width: 1280px;
        }
    `;
}
